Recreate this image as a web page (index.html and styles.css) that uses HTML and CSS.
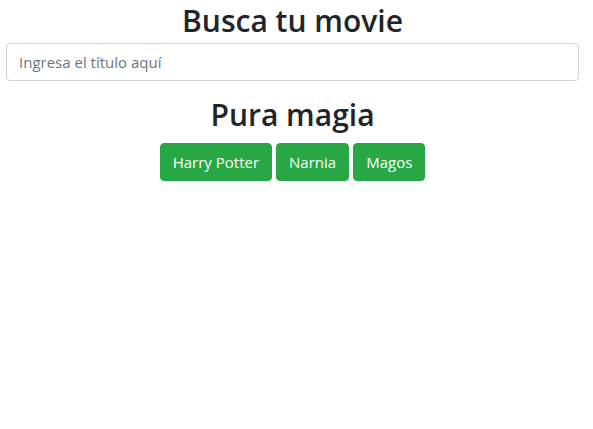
FILE: index.html
```html
<!DOCTYPE html>
<html lang="es">
<head>
<meta charset="utf-8">
<link rel="stylesheet" href="styles.css">
</head>
<body>
<div class="page">
  <h1 class="title">Busca tu movie</h1>
  <input class="search" type="text" placeholder="Ingresa el título aquí">
  <h2 class="subtitle">Pura magia</h2>
  <div class="buttons">
    <button class="btn">Harry Potter</button>
    <button class="btn">Narnia</button>
    <button class="btn">Magos</button>
  </div>
</div>
</body>
</html>
```
FILE: styles.css
```css
html, body {
  margin: 0;
  padding: 0;
  background: #fff;
}
body {
  font-family: "Open Sans", "Noto Sans", sans-serif;
  color: #212529;
}
.page {
  padding: 0 14px 0 6px;
  display: flex;
  flex-direction: column;
}
.title {
  margin: 0;
  padding-top: 3px;
  font-size: 30px;
  font-weight: 600;
  line-height: 35px;
  text-align: center;
}
.search {
  margin-top: 5px;
  height: 38px;
  box-sizing: border-box;
  border: 1px solid #ced4da;
  border-radius: 4px;
  padding: 6px 12px;
  font-family: inherit;
  font-size: 15px;
  color: #495057;
  width: 100%;
}
.search::placeholder {
  color: #6c757d;
}
.subtitle {
  margin: 15px 0 0;
  font-size: 30px;
  font-weight: 600;
  line-height: 38px;
  text-align: center;
}
.buttons {
  margin-top: 9px;
  display: flex;
  justify-content: center;
  gap: 4px;
}
.btn {
  height: 38px;
  background: #28a745;
  border: 1px solid #28a745;
  border-radius: 4px;
  color: #fff;
  font-family: inherit;
  font-size: 15px;
  padding: 0 12px;
}
```
